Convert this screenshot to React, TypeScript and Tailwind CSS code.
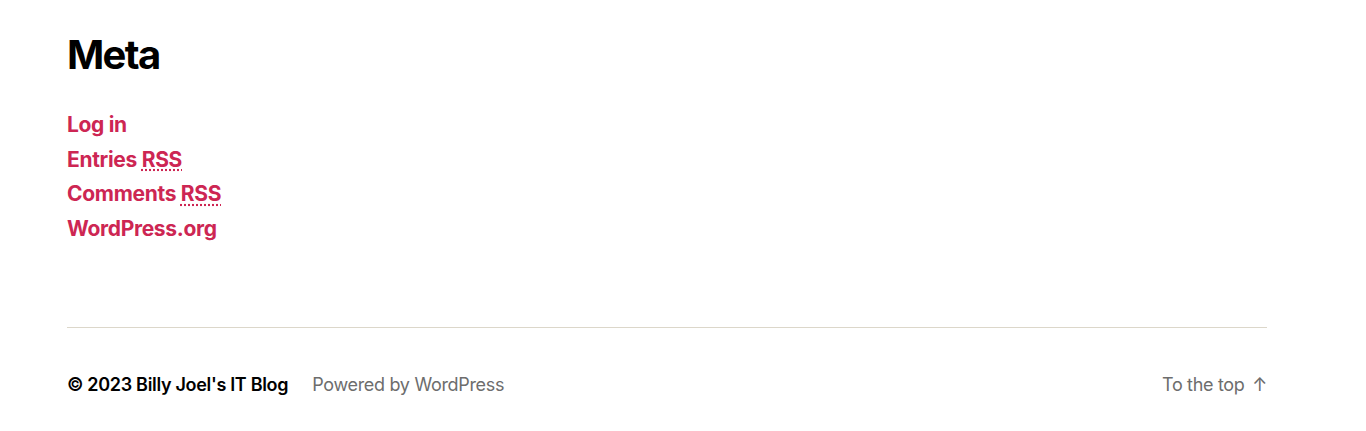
const metaLinks = [
  { label: "Log in" },
  { label: "Entries", abbr: "RSS" },
  { label: "Comments", abbr: "RSS" },
  { label: "WordPress.org" },
]

export default function App() {
  return (
    <div className="h-[431px] w-full overflow-hidden bg-white font-['Inter',sans-serif]">
      <div className="ml-[67px] w-[1200px]">
        <section className="pt-[30px]">
          <h2 className="text-[40px] font-bold leading-[50px] tracking-[-0.0415625em] text-black">Meta</h2>
          <ul className="mt-[28px] flex flex-col text-[21px] font-bold leading-[34.67px] tracking-[-0.015em] text-[#cd2653]">
            {metaLinks.map((item) => (
              <li key={item.label}>
                <a href="#">
                  {item.label}
                  {item.abbr && (
                    <>
                      {" "}
                      <abbr
                        title="Really Simple Syndication"
                        className="underline decoration-dotted underline-offset-[3px]"
                      >
                        {item.abbr}
                      </abbr>
                    </>
                  )}
                </a>
              </li>
            ))}
          </ul>
        </section>

        <footer className="mt-[80px] border-t border-[#dcd7ca] pt-[43px]">
          <div className="flex items-center justify-between text-[18px] leading-[27px] tracking-[-0.0175em]">
            <div className="flex items-center">
              <p className="font-semibold text-black">
                © 2023 <a href="#">Billy Joel's IT Blog</a>
              </p>
              <p className="ml-6 text-[#6d6d6d]">
                <a href="#">Powered by WordPress</a>
              </p>
            </div>
            <a href="#" className="text-[#6d6d6d]">
              To the top <span aria-hidden="true" className="ml-[3px]">↑</span>
            </a>
          </div>
        </footer>
      </div>
    </div>
  )
}
